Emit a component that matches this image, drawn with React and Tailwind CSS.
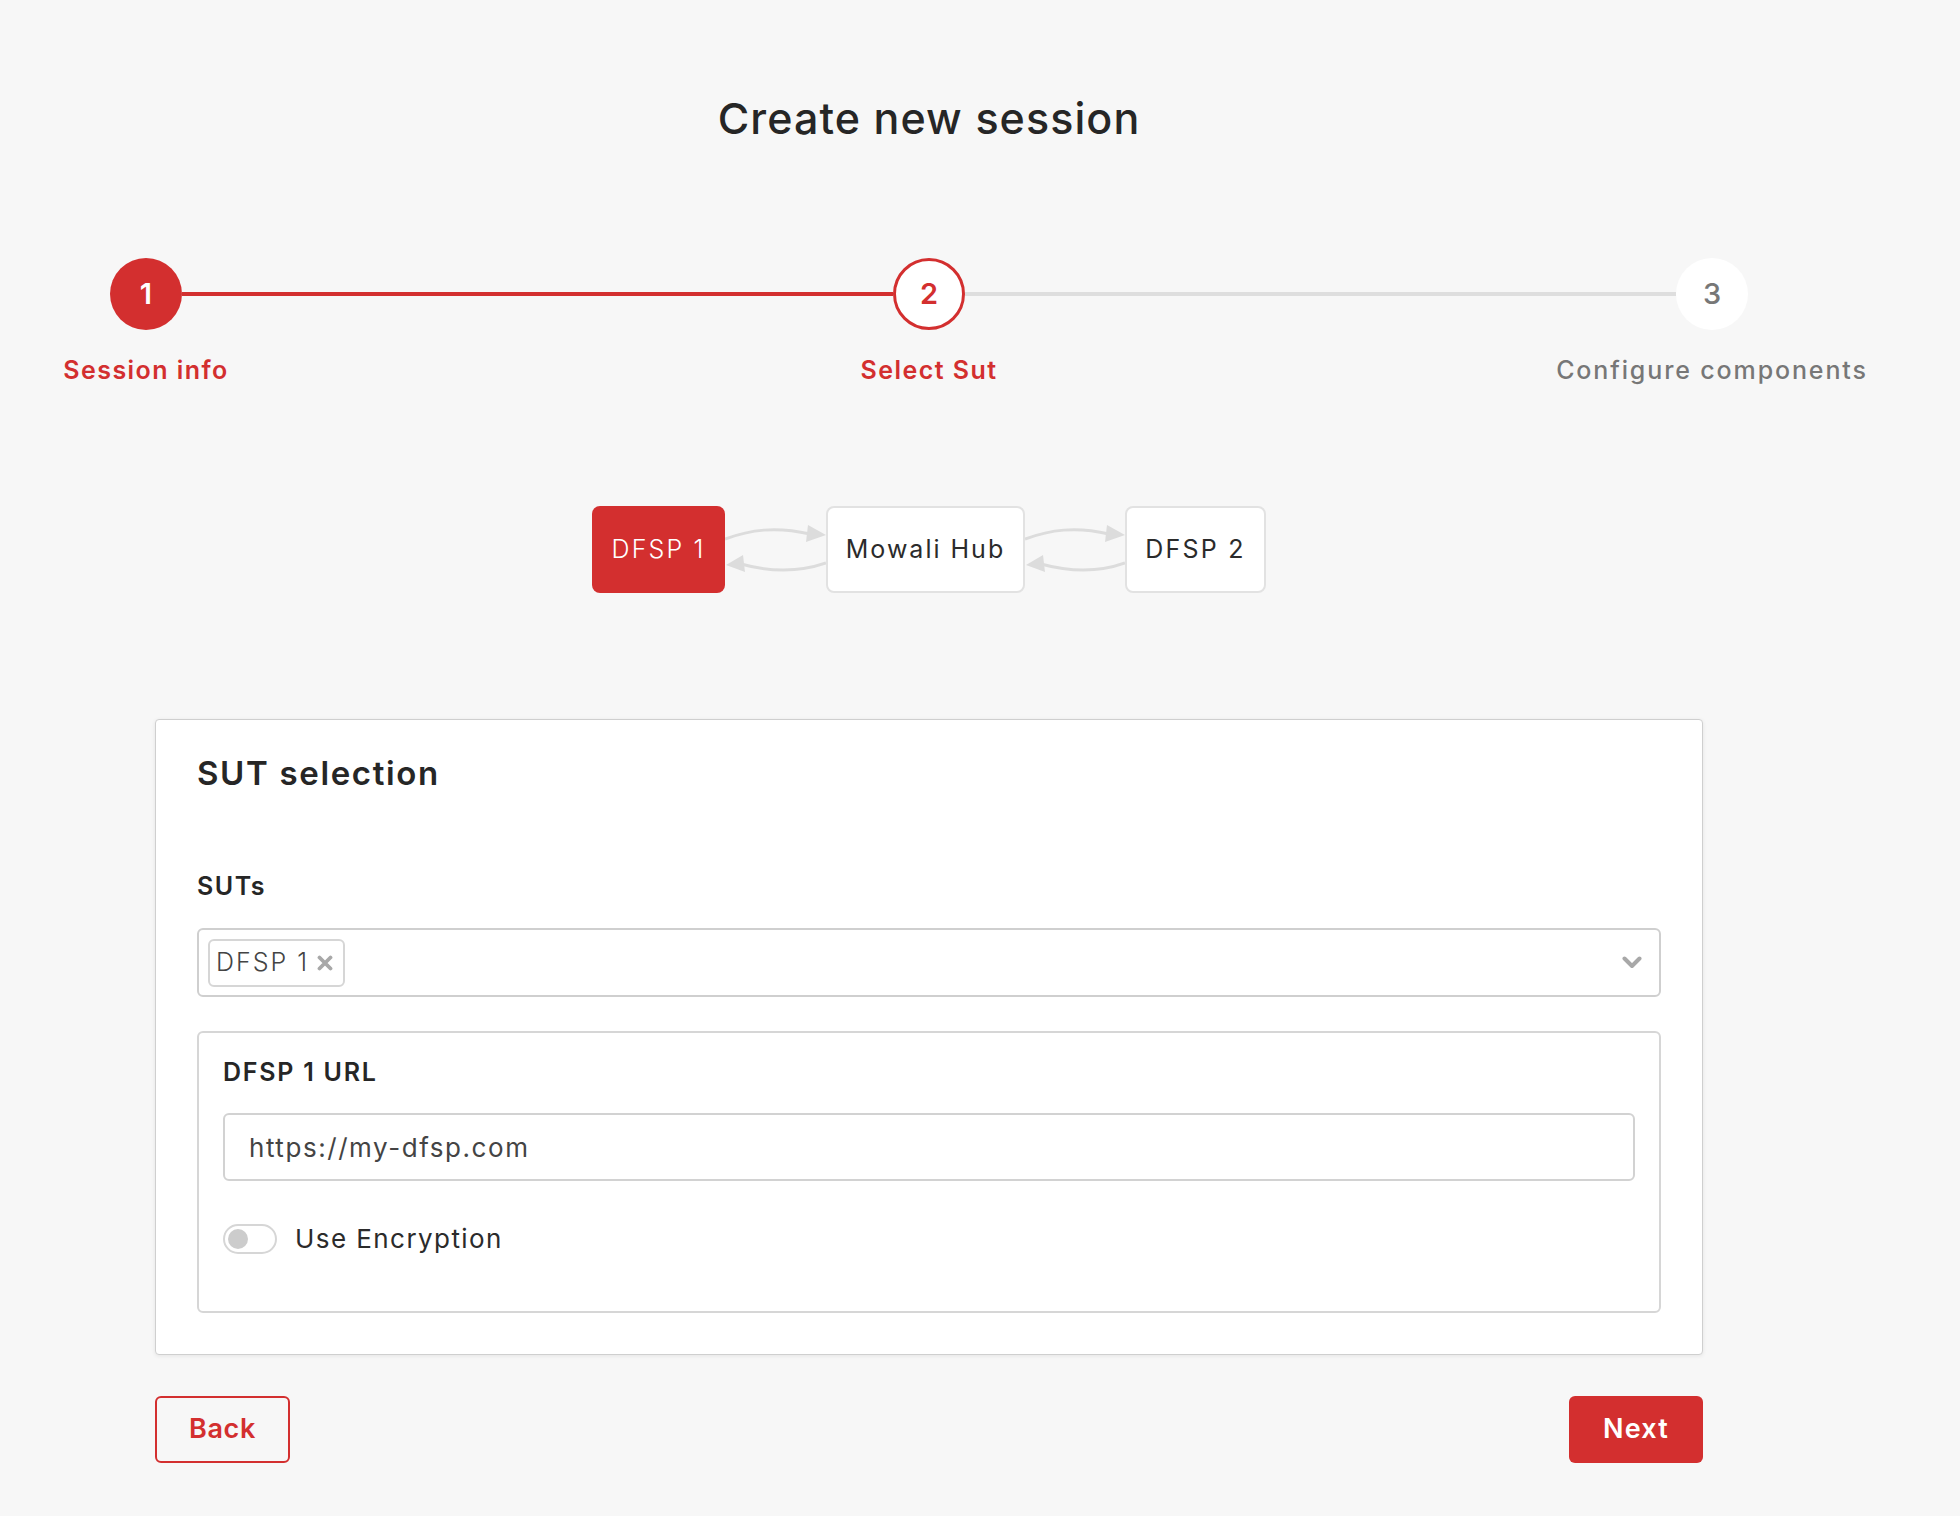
import React from 'react';

function Arrows({ width }) {
  return (
    <svg width={width} height="87" viewBox={`0 0 ${width} 87`} fill="none">
      <path d={`M0 33 C 25 24, 50 20, ${width - 16} 28`} stroke="#dcdcdc" strokeWidth="3" />
      <path d={`M${width - 18} 19 L${width} 29 L${width - 20} 36 Z`} fill="#dcdcdc" />
      <path d={`M${width} 57 C 75 66, 45 66, 16 58`} stroke="#dcdcdc" strokeWidth="3" />
      <path d={`M18 49 L1 59 L20 66 Z`} fill="#dcdcdc" />
    </svg>
  );
}

function StepCircle({ n, state }) {
  if (state === 'done') {
    return (
      <div className="w-[72px] h-[72px] shrink-0 rounded-full bg-[#d32f2f] flex items-center justify-center text-white text-[29px] font-semibold">
        {n}
      </div>
    );
  }
  if (state === 'active') {
    return (
      <div className="w-[72px] h-[72px] shrink-0 rounded-full bg-white border-[3px] border-[#d32f2f] flex items-center justify-center text-[#d32f2f] text-[29px] font-semibold">
        {n}
      </div>
    );
  }
  return (
    <div className="w-[72px] h-[72px] shrink-0 rounded-full bg-white flex items-center justify-center text-[#777] text-[29px] font-medium">
      {n}
    </div>
  );
}

export default function App() {
  return (
    <div className="min-h-[1516px] bg-[#f7f7f7] font-['Inter','Lato',sans-serif] text-[#262626]">
      <div className="w-[1858px] pt-[92px]">
        <h1 className="text-center text-[43px] leading-[52px] font-medium tracking-[0.025em] text-[#262626]">Create new session</h1>

        {/* Stepper */}
        <div className="mt-[114px] px-[110px] flex items-center">
          <StepCircle n={1} state="done" />
          <div className="flex-1 h-[4px] bg-[#d32f2f]" />
          <StepCircle n={2} state="active" />
          <div className="flex-1 h-[4px] bg-[#dedede]" />
          <StepCircle n={3} state="todo" />
        </div>
        <div className="mt-[24px] px-[46px] flex justify-between text-[25px] leading-[32px] font-semibold">
          <div className="w-[200px] flex justify-center whitespace-nowrap tracking-[0.058em] text-[#d32f2f]">Session info</div>
          <div className="w-[200px] flex justify-center whitespace-nowrap tracking-[0.058em] text-[#d32f2f]">Select Sut</div>
          <div className="w-[200px] flex justify-center whitespace-nowrap tracking-[0.075em] font-medium text-[#777]">Configure components</div>
        </div>

        {/* SUT diagram */}
        <div className="mt-[120px] flex justify-center items-center">
          <div className="w-[133px] h-[87px] rounded-lg bg-[#d32f2f] flex items-center justify-center text-white text-[25px] font-light tracking-[0.085em]">
            DFSP 1
          </div>
          <Arrows width={101} />
          <div className="w-[199px] h-[87px] rounded-lg bg-white border-2 border-[#e2e2e2] flex items-center justify-center text-[#2b2b2b] text-[25px] tracking-[0.08em]">
            Mowali Hub
          </div>
          <Arrows width={100} />
          <div className="w-[141px] h-[87px] rounded-lg bg-white border-2 border-[#e2e2e2] flex items-center justify-center text-[#2b2b2b] text-[25px] tracking-[0.09em]">
            DFSP 2
          </div>
        </div>

        {/* Card */}
        <div className="mx-[155px] mt-[126px] bg-white border border-[#cfcfcf] rounded-[4px] shadow-[0_1px_4px_rgba(0,0,0,0.08)] px-[41px] pt-[33px] pb-[41px]">
          <h2 className="text-[33px] leading-[40px] font-semibold tracking-[0.05em] text-[#262626]">SUT selection</h2>

          <div className="mt-[77px] text-[25px] leading-[32px] font-semibold tracking-[0.06em]">SUTs</div>

          <div className="mt-[26px] h-[69px] border-2 border-[#cfcfcf] rounded-[6px] flex items-center pl-[9px] pr-[17px]">
            <div className="h-[48px] border-2 border-[#d6d6d6] rounded-[6px] flex items-center gap-[8px] pl-[6px] pr-[10px] text-[25px] font-light tracking-[0.08em] text-[#444]">
              DFSP 1
              <svg width="16" height="16" viewBox="0 0 16 16">
                <path d="M2.5 2.5 L13.5 13.5 M13.5 2.5 L2.5 13.5" stroke="#a8a8a8" strokeWidth="3.8" strokeLinecap="round" />
              </svg>
            </div>
            <div className="flex-1" />
            <svg width="20" height="14" viewBox="0 0 20 14" fill="none">
              <path d="M2.5 2.5 L10 10 L17.5 2.5" stroke="#a8a8a8" strokeWidth="4" strokeLinecap="round" strokeLinejoin="round" />
            </svg>
          </div>

          <div className="mt-[34px] border-2 border-[#d6d6d6] rounded-[6px] px-[24px] pt-[23px] pb-[56px]">
            <div className="text-[25px] leading-[32px] font-semibold tracking-[0.07em]">DFSP 1 URL</div>
            <div className="mt-[25px] h-[68px] border-2 border-[#d2d2d2] rounded-[6px] bg-white flex items-center pl-[24px] text-[26px] tracking-[0.06em] text-[#444]">
              https://my-dfsp.com
            </div>
            <div className="mt-[42px] flex items-center gap-[18px]">
              <div className="w-[54px] h-[30px] rounded-full border-2 border-[#d6d6d6] bg-white flex items-center pl-[3px]">
                <div className="w-[20px] h-[20px] rounded-full bg-[#cccccc]" />
              </div>
              <span className="text-[26px] leading-[32px] tracking-[0.055em] text-[#2b2b2b]">Use Encryption</span>
            </div>
          </div>
        </div>

        {/* Buttons */}
        <div className="mx-[155px] mt-[41px] flex justify-between">
          <button className="w-[135px] h-[67px] border-2 border-[#d32f2f] rounded-[6px] text-[#d32f2f] text-[27px] font-semibold tracking-[0.025em]">
            Back
          </button>
          <button className="w-[134px] h-[67px] bg-[#d32f2f] rounded-[6px] text-white text-[27px] font-semibold tracking-[0.045em]">
            Next
          </button>
        </div>
      </div>
    </div>
  );
}
